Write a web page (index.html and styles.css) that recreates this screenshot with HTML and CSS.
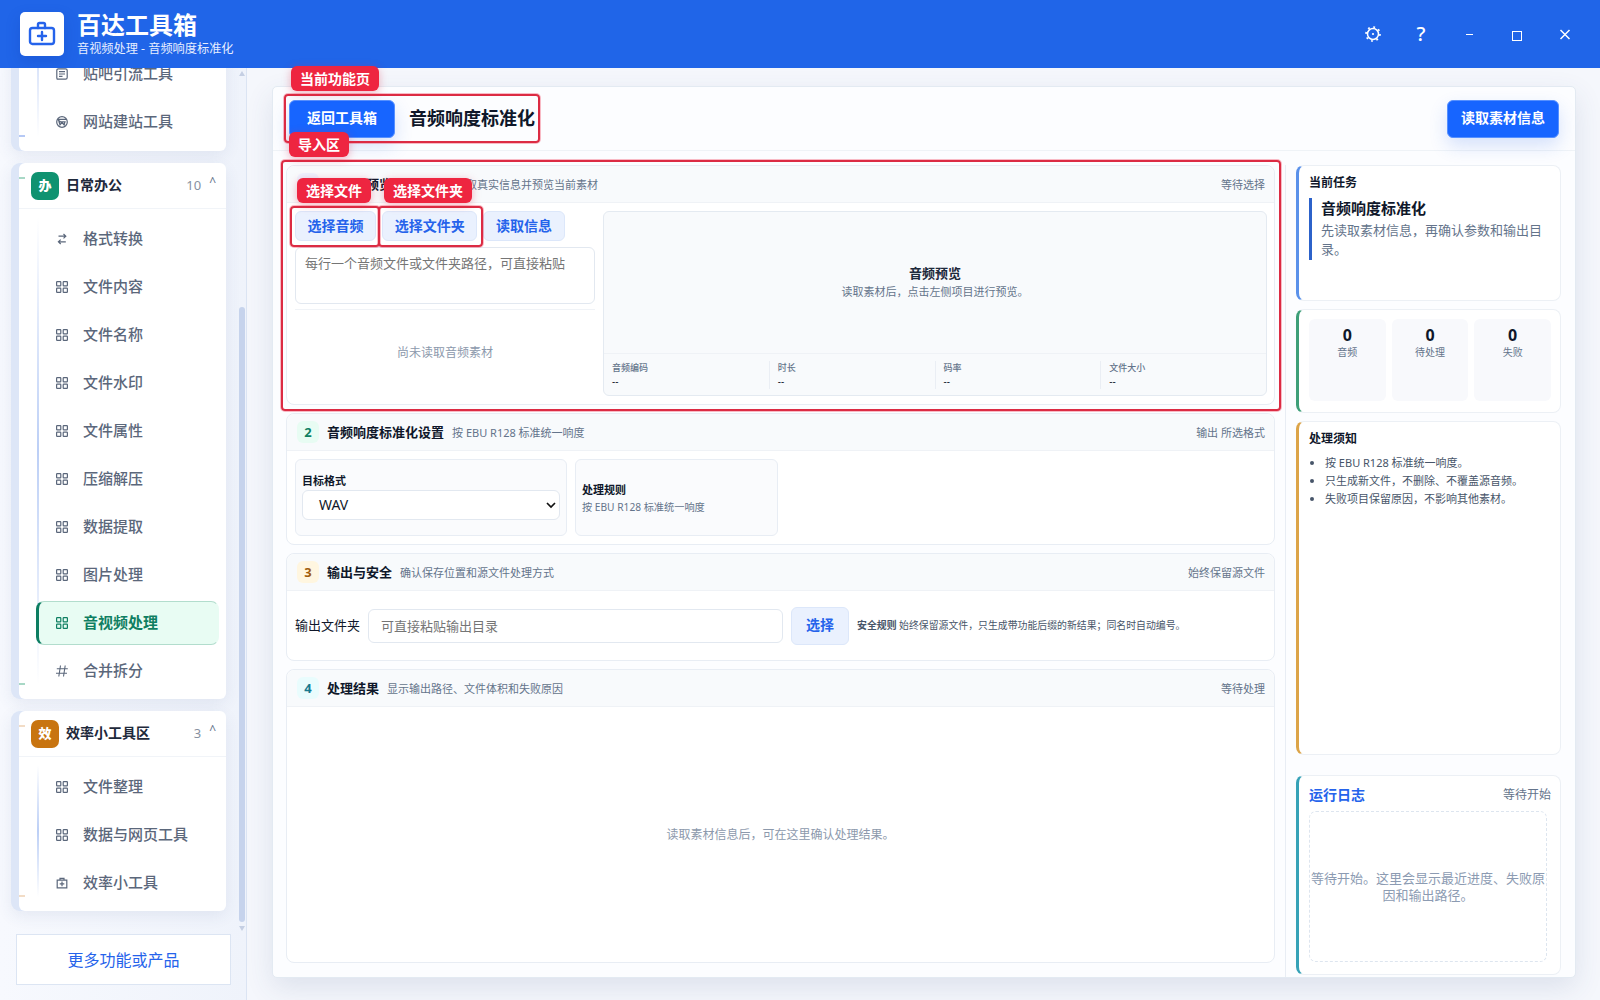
FILE: index.html
```html
<!DOCTYPE html>
<html lang="zh-CN">
<head>
<meta charset="utf-8">
<title>百达工具箱</title>
<link rel="stylesheet" href="styles.css">
</head>
<body>
<svg class="defs" width="0" height="0">
  <symbol id="grid" viewBox="0 0 12 12"><g fill="none" stroke="currentColor" stroke-width="1.200"><rect x=".6" y=".6" width="4.200" height="4.200" rx=".6"/><rect x="7.200" y=".6" width="4.200" height="4.200" rx=".6"/><rect x=".6" y="7.200" width="4.200" height="4.200" rx=".6"/><rect x="7.200" y="7.200" width="4.200" height="4.200" rx=".6"/></g></symbol>
  <symbol id="note" viewBox="0 0 12 12"><path fill="none" stroke="currentColor" stroke-width="1.200" d="M2.400.8h7.200q1.600 0 1.600 1.600v7.200q0 1.600-1.600 1.600H1.200L.8 9.800V2.400Q.8.8 2.400.8zM3 3.700h6M3 6h6M3 8.300h3.500"/></symbol>
  <symbol id="globe" viewBox="0 0 12 12"><g fill="none" stroke="currentColor" stroke-width="1.200"><circle cx="6" cy="6" r="5.300"/><path d="M1.500 3.400h9M3 5.800l1 3 2-2.300 2 2.300 1-3zM2 4l7 5"/></g></symbol>
  <symbol id="swap" viewBox="0 0 12 12"><path fill="none" stroke="currentColor" stroke-width="1.200" d="M2.500 3.200h7M7.500 1l2.300 2.200-2.300 2.200M9.800 8.800h-7M4.700 6.600L2.400 8.800 4.700 11"/></symbol>
  <symbol id="hash" viewBox="0 0 12 12"><path fill="none" stroke="currentColor" stroke-width="1.100" d="M4.500.5l-1.700 11M9.200.5l-1.700 11M.8 3.800h11M0 8.200h11"/></symbol>
  <symbol id="kit" viewBox="0 0 12 12"><path fill="none" stroke="currentColor" stroke-width="1.200" d="M1.200 3.200h9.600v7.600H1.200zM4 3V1.300h4V3M6 4.600v4.600M3.700 6.900h4.600"/></symbol>
</svg>
<header class="topbar">
  <div class="logo"><svg width="28" height="26" viewBox="0 0 28 26" fill="none" stroke="#2563eb" stroke-width="2.400" stroke-linecap="round" stroke-linejoin="round"><rect x="2" y="7" width="24" height="16" rx="2.500"/><path d="M10 7V3.500Q10 2 11.500 2h4Q17 2 17 3.500V7M14 11v8M10 15h8"/></svg></div>
  <div class="brand"><h1>百达工具箱</h1><p>音视频处理 - 音频响度标准化</p></div>
  <div class="window-controls">
    <span><svg width="18" height="18" viewBox="0 0 18 18" fill="none" stroke="#fff"><circle cx="9" cy="9" r="5.500" stroke-width="1.500"/><circle cx="9" cy="9" r="7" stroke-width="1.700" stroke-dasharray="1.900 3.598"/><circle cx="9" cy="9" r="1.100" fill="#fff" stroke="none"/></svg></span>
    <span class="help">?</span>
    <span><svg width="12" height="12" viewBox="0 0 12 12"><path d="M3 6.500h7" stroke="#fff"/></svg></span>
    <span><svg width="12" height="14" viewBox="0 0 12 14"><rect x="1.500" y="4.500" width="9" height="9" fill="none" stroke="#fff"/></svg></span>
    <span><svg width="12" height="12" viewBox="0 0 12 12"><path d="M1.500 2l9 9m0-9l-9 9" stroke="#fff" stroke-width="1.500"/></svg></span>
  </div>
</header>
<div class="body">
  <aside class="sidebar">
    <nav class="groups">
      <section class="group blue first">
        <ul>
          <li><svg><use href="#note"/></svg>贴吧引流工具</li>
          <li><svg><use href="#globe"/></svg>网站建站工具</li>
        </ul>
      </section>
      <section class="group green">
        <h2><b>办</b>日常办公<span class="count">10</span><i>^</i></h2>
        <ul>
          <li><svg><use href="#swap"/></svg>格式转换</li>
          <li><svg><use href="#grid"/></svg>文件内容</li>
          <li><svg><use href="#grid"/></svg>文件名称</li>
          <li><svg><use href="#grid"/></svg>文件水印</li>
          <li><svg><use href="#grid"/></svg>文件属性</li>
          <li><svg><use href="#grid"/></svg>压缩解压</li>
          <li><svg><use href="#grid"/></svg>数据提取</li>
          <li><svg><use href="#grid"/></svg>图片处理</li>
          <li class="active"><svg><use href="#grid"/></svg>音视频处理</li>
          <li><svg><use href="#hash"/></svg>合并拆分</li>
        </ul>
      </section>
      <section class="group orange">
        <h2><b>效</b>效率小工具区<span class="count">3</span><i>^</i></h2>
        <ul>
          <li><svg><use href="#grid"/></svg>文件整理</li>
          <li><svg><use href="#grid"/></svg>数据与网页工具</li>
          <li><svg><use href="#kit"/></svg>效率小工具</li>
        </ul>
      </section>
    </nav>
    <a class="more">更多功能或产品</a>
    <div class="scrollbar"><span class="up"></span><span class="thumb"></span><span class="down"></span></div>
  </aside>
  <main class="panel">
    <div class="panel-head">
      <button class="primary back">返回工具箱</button>
      <h2>音频响度标准化</h2>
      <button class="primary read">读取素材信息</button>
      <div class="mark mark-page"><span>当前功能页</span></div>
    </div>
    <div class="columns">
      <div class="steps">
        <section class="step step1">
          <div class="step-head"><b class="n1">1</b><h3>导入与预览</h3><p>选择素材后读取真实信息并预览当前素材</p><em>等待选择</em></div>
          <div class="import">
            <div class="source">
              <div class="actions"><button class="soft">选择音频</button><button class="soft">选择文件夹</button><button class="soft">读取信息</button></div>
              <textarea placeholder="每行一个音频文件或文件夹路径，可直接粘贴"></textarea>
              <div class="empty">尚未读取音频素材</div>
            </div>
            <div class="preview">
              <div class="stage"><strong>音频预览</strong><p>读取素材后，点击左侧项目进行预览。</p></div>
              <dl>
                <div><dt>音频编码</dt><dd>--</dd></div>
                <div><dt>时长</dt><dd>--</dd></div>
                <div><dt>码率</dt><dd>--</dd></div>
                <div><dt>文件大小</dt><dd>--</dd></div>
              </dl>
            </div>
          </div>
          <div class="mark mark-import"><span>导入区</span></div>
          <div class="mark mark-file"><span>选择文件</span></div>
          <div class="mark mark-folder"><span>选择文件夹</span></div>
        </section>
        <section class="step step2">
          <div class="step-head"><b class="n2">2</b><h3>音频响度标准化设置</h3><p>按 EBU R128 标准统一响度</p><em>输出 所选格式</em></div>
          <div class="settings">
            <div class="card format"><label>目标格式</label><div class="select">WAV<svg width="10" height="7" viewBox="0 0 10 7"><path d="M1 1l4 4 4-4" fill="none" stroke="#111" stroke-width="1.700"/></svg></div></div>
            <div class="card rule"><label>处理规则</label><p>按 EBU R128 标准统一响度</p></div>
          </div>
        </section>
        <section class="step step3">
          <div class="step-head"><b class="n3">3</b><h3>输出与安全</h3><p>确认保存位置和源文件处理方式</p><em>始终保留源文件</em></div>
          <div class="output">
            <label>输出文件夹</label><input placeholder="可直接粘贴输出目录"><button class="soft">选择</button>
            <p><strong>安全规则</strong> 始终保留源文件，只生成带功能后缀的新结果；同名时自动编号。</p>
          </div>
        </section>
        <section class="step step4">
          <div class="step-head"><b class="n4">4</b><h3>处理结果</h3><p>显示输出路径、文件体积和失败原因</p><em>等待处理</em></div>
          <div class="result">读取素材信息后，可在这里确认处理结果。</div>
        </section>
      </div>
      <aside class="info">
        <section class="task"><h4>当前任务</h4><div class="quote"><strong>音频响度标准化</strong><p>先读取素材信息，再确认参数和输出目录。</p></div></section>
        <section class="stats">
          <div><strong>0</strong><span>音频</span></div>
          <div><strong>0</strong><span>待处理</span></div>
          <div><strong>0</strong><span>失败</span></div>
        </section>
        <section class="notes"><h4>处理须知</h4>
          <ul><li>按 EBU R128 标准统一响度。</li><li>只生成新文件，不删除、不覆盖源音频。</li><li>失败项目保留原因，不影响其他素材。</li></ul>
        </section>
        <section class="log">
          <div class="log-head"><h4>运行日志</h4><span>等待开始</span></div>
          <div class="log-body">等待开始。这里会显示最近进度、失败原因和输出路径。</div>
        </section>
      </aside>
    </div>
  </main>
</div>
</body>
</html>
```
FILE: styles.css
```css
* { box-sizing: border-box; margin: 0; padding: 0; }
body {
  width: 1600px; height: 1000px; overflow: hidden;
  display: flex; flex-direction: column;
  font-family: "Noto Sans", "Noto Sans CJK SC", sans-serif;
  font-size: 13px; line-height: 1.3; color: #0f172a;
  background: #f5f7fc;
}
button, input, textarea { font: inherit; color: inherit; }
.defs { position: absolute; }
ul { list-style: none; }
em, i { font-style: normal; }

.topbar { height: 68px; flex: none; display: flex; align-items: center; padding: 0 11px 0 20px; background: #2065e8; color: #fff; }
.logo { width: 44px; height: 44px; border-radius: 5px; background: #fff; display: flex; align-items: center; justify-content: center; box-shadow: 0 6px 14px rgba(20, 60, 170, .25); }
.brand { margin: -2px 0 0 13px; }
.brand h1 { font-size: 24px; line-height: 30px; font-weight: 700; }
.brand p { font-size: 12.200px; line-height: 17px; color: #e6eeff; white-space: nowrap; }
.window-controls { margin-left: auto; display: flex; }
.window-controls span { width: 48px; height: 34px; display: flex; align-items: center; justify-content: center; }
.window-controls .help { font-size: 20px; font-weight: 500; }

.body { flex: 1; min-height: 0; display: flex; }
.sidebar { position: relative; width: 247px; flex: none; display: flex; flex-direction: column; border-right: 1px solid #dbe4f3; background: linear-gradient(90deg, #f7f9fe, #eff3fb); }
.groups { height: 866px; padding: 0 20px 0 11px; overflow: hidden; display: flex; flex-direction: column; gap: 12px; }
.group { position: relative; flex: none; border-left: 8px solid #dde6f7; border-radius: 9px; background: #dde6f7; box-shadow: 0 5px 16px rgba(60, 80, 130, .09); }
.group > * { background: #fff; }
.group h2 { height: 46px; border-radius: 6px 6px 0 0; border-bottom: 1px solid #f1f4f8; display: flex; align-items: center; padding: 0 10px 0 12px; font-size: 14px; font-weight: 700; color: #1e293b; }
.group h2 b { width: 28px; height: 28px; margin-right: 7px; border-radius: 7px; color: #fff; font-size: 13px; display: flex; align-items: center; justify-content: center; }
.green h2 b { background: #0f9270; }
.orange h2 b { background: #c87410; }
.count { margin-left: auto; font-size: 13px; font-weight: 400; color: #8791a1; }
.group h2 i { font-size: 12px; font-weight: 400; color: #64748b; margin: -7px 0 0 8px; }
.group ul { position: relative; padding: 8px 7px 6px 17px; display: flex; flex-direction: column; gap: 4px; border-radius: 0 0 6px 6px; }
.group.first { margin-top: -16px; }
.group.first ul { padding-top: 0; padding-bottom: 7px; }
.group ul::before { content: ""; position: absolute; left: 18px; top: 8px; bottom: 14px; width: 2px; background: linear-gradient(#fff, #bccff6 50%, #fff); }
.group.first ul::before { background: linear-gradient(#d6e1f9, #fff); }
.group::before, .group::after { content: ""; position: absolute; left: 0; width: 6px; height: 2px; background: var(--tick); z-index: 1; }
.group::before { top: 14px; }
.group::after { bottom: 14px; }
.blue { --tick: #b6c9f5; }
.green { --tick: #a8d8c6; }
.orange { --tick: #f2dcc6; }
.group li { position: relative; height: 44px; display: flex; align-items: center; padding-left: 19px; font-size: 15px; font-weight: 500; color: #5b677b; border-radius: 8px; border-left: 1px solid transparent; }
.group li svg { width: 12px; height: 12px; margin-right: 15px; }
.group li.active { padding-left: 17px; background: #e8fcf3; color: #0f7f62; font-weight: 700; border: 1px solid #b2ddcd; border-left: 3px solid #0c7d61; border-right-color: #e8fcf3; }
.more { margin: 0 15px 0 16px; height: 51px; display: flex; align-items: center; justify-content: center; background: #fff; border: 1px solid #dce5f3; color: #2563eb; font-size: 16px; padding-top: 1px; }
.scrollbar { position: absolute; right: 0; top: 3px; width: 8px; height: 862px; display: flex; flex-direction: column; align-items: center; }
.up, .down { border: 3px solid transparent; }
.up { border-bottom: 5px solid #c5cfe3; border-top: 0; }
.down { border-top: 5px solid #c5cfe3; border-bottom: 0; margin-top: 4px; }
.thumb { width: 6px; height: 615px; margin-top: 231px; border-radius: 3px; background: #c6d3ec; }

.panel { margin: 18px 24px 22px 25px; width: 1304px; display: flex; flex-direction: column; background: #fcfdff; border: 1px solid #e3eaf2; border-radius: 5px; box-shadow: 0 10px 28px rgba(50, 70, 120, .12); }
.panel-head { position: relative; height: 64px; display: flex; align-items: center; padding: 0 16px 0 16px; border-bottom: 1px solid #eff3f7; }
.primary { height: 38px; border: 1px solid #5690ff; border-radius: 6px; background: #1765ff; color: #fff; font-size: 14px; font-weight: 700; box-shadow: 0 8px 18px rgba(37, 99, 235, .18); }
.back { width: 106px; }
.read { width: 112px; margin-left: auto; }
.panel-head h2 { margin-left: 14px; font-size: 18px; font-weight: 700; }
.columns { flex: 1; display: flex; padding-left: 13px; }
.steps { width: 1000px; padding: 0 10px 14px 0; margin-top: 14px; display: flex; flex-direction: column; gap: 8px; border-right: 1px solid #e8edf4; }
.step { position: relative; display: flex; flex-direction: column; border: 1px solid #e8edf4; border-radius: 8px; background: #fff; }
.step1 { height: 240px; }
.step2 { height: 132px; }
.step3 { height: 108px; }
.step4 { flex: 1; }
.step-head { height: 37px; flex: none; display: flex; align-items: center; padding: 0 9px 0 10px; border-bottom: 1px solid #eff2f6; border-radius: 8px 8px 0 0; background: #f8fafc; }
.step-head b { width: 22px; height: 22px; border-radius: 6px; display: flex; align-items: center; justify-content: center; font-size: 13px; }
.n1 { background: #edf3ff; color: #2563eb; }
.n2 { background: #e8fcf3; color: #0f7f62; }
.n3 { background: #fff6e0; color: #a15c0c; }
.n4 { background: #e9fcfd; color: #177a90; }
.step-head h3 { margin-left: 8px; font-size: 13px; font-weight: 700; }
.step-head p { margin-left: 8px; padding-top: 2px; font-size: 11px; color: #64748b; }
.step-head em { margin-left: auto; padding-top: 2px; font-size: 11px; color: #64748b; }
.import { flex: 1; display: flex; gap: 8px; padding: 8px 7px 8px 8px; }
.source { width: 300px; display: flex; flex-direction: column; }
.actions { display: flex; gap: 6px; }
.soft { height: 30px; padding: 0 12px; border: 1px solid #dce7fa; border-radius: 6px; background: #eaf1fe; color: #2563eb; font-size: 14px; font-weight: 700; }
.actions .soft { padding: 0 11.600px; }
textarea { display: block; height: 57px; margin-top: 6px; padding: 7px 9px; border: 1px solid #e2e8f0; border-radius: 6px; resize: none; font-size: 13px; background: #fff; }
::placeholder { color: #757575; }
.empty { flex: 1; margin-top: 5px; border-top: 1px solid #f0f3f7; display: flex; align-items: center; justify-content: center; color: #8c99ac; font-size: 12px; }
.preview { flex: 1; display: flex; flex-direction: column; border: 1px solid #e4eaf1; border-radius: 6px; background: #f8fafc; }
.stage { flex: 1; display: flex; flex-direction: column; align-items: center; justify-content: center; }
.stage strong { font-size: 13px; line-height: 19px; color: #1e293b; }
.stage p { font-size: 11px; line-height: 18px; color: #64748b; }
.preview dl { height: 42px; display: flex; border-top: 1px solid #eff2f6; padding-top: 7px; }
.preview dl div { flex: 1; height: 28px; padding-left: 8px; border-right: 1px solid #eaeef4; }
.preview dl div:last-child { border: 0; }
dt { font-size: 9px; line-height: 13px; color: #64748b; font-weight: 500; }
dd { font-size: 10px; line-height: 14px; }
.settings { flex: 1; display: flex; gap: 8px; padding: 8px; }
.card { display: flex; flex-direction: column; justify-content: center; border: 1px solid #e8edf4; border-radius: 6px; background: #fafbfd; padding: 0 6px; }
.format { width: 272px; padding-top: 2px; padding-bottom: 5px; }
.rule { width: 203px; }
.card label { font-size: 11px; line-height: 18px; font-weight: 700; }
.card p { font-size: 10.200px; line-height: 16px; color: #64748b; }
.select { height: 30px; display: flex; align-items: center; justify-content: space-between; padding: 0 3px 0 16px; border: 1px solid #e2e8f0; border-radius: 6px; background: #fff; font-size: 14px; }
.output { flex: 1; display: flex; align-items: center; gap: 8px; padding: 0 8px; }
.output input { width: 415px; height: 34px; padding: 0 12px; border: 1px solid #e2e8f0; border-radius: 6px; background: #fff; }
.output .soft { width: 58px; height: 38px; }
.output p { font-size: 9.900px; color: #475569; white-space: nowrap; }
.result { flex: 1; display: flex; align-items: center; justify-content: center; font-size: 12px; color: #8c99ac; }

.info { width: 275px; display: flex; flex-direction: column; padding: 14px 0 2px 10px; }
.info section { border: 1px solid #ecf0f5; border-left: 3px solid var(--accent); border-radius: 8px; background: #fff; padding: 9px 9px 10px 10px; }
.info h4 { font-size: 12px; line-height: 16px; font-weight: 700; }
.info .task { --accent: #5a91ea; height: 136px; margin-bottom: 8px; }
.quote { margin-top: 7px; border-left: 3px solid #2c62ca; padding-left: 9px; height: 62px; }
.quote strong { display: block; font-size: 15px; line-height: 21px; }
.quote p { font-size: 13px; line-height: 19px; margin-top: 2px; color: #64748b; }
.info .stats { --accent: #3e9f78; height: 104px; margin-bottom: 8px; display: flex; gap: 6px; }
.stats div { flex: 1; height: 82px; padding-top: 7px; border-radius: 6px; background: #f8f9fc; text-align: center; }
.stats strong { display: block; font-size: 16px; line-height: 19px; }
.stats span { display: block; font-size: 10px; line-height: 14px; color: #64748b; }
.info .notes { --accent: #dca448; height: 334px; margin-bottom: 20px; }
.notes ul { list-style: disc; margin-top: 7px; padding-left: 16px; font-size: 11px; line-height: 18px; color: #475569; }
.info .log { --accent: #36a2b7; flex: 1; display: flex; flex-direction: column; }
.log-head { display: flex; justify-content: space-between; align-items: center; }
.log-head h4 { font-size: 14px; line-height: 20px; color: #2563eb; }
.log-head span { font-size: 12px; color: #64748b; }
.log-body { flex: 1; margin: 6px 4px 2px 0; border: 1px dashed #dde5ef; border-radius: 7px; display: flex; align-items: center; text-align: center; font-size: 13px; line-height: 17px; color: #8c9bb2; }

.mark { position: absolute; border: 2px solid #dc2b43; border-radius: 4px; box-shadow: 0 0 0 1px rgba(240, 60, 90, .35); z-index: 1; }
.mark span { position: absolute; height: 25px; padding: 0 9px; border-radius: 6px; background: #ee2540; color: #fff; font-size: 14px; font-weight: 700; line-height: 25px; white-space: nowrap; box-shadow: 0 2px 8px rgba(220, 40, 70, .35); }
.mark-page { left: 11px; top: 7px; width: 256px; height: 49px; }
.mark-page span { left: 5px; top: -30px; }
.mark-import { left: -6px; top: -6px; width: 1000px; height: 251px; }
.mark-import span { left: 6px; top: -30px; }
.mark-file { left: 3px; top: 40px; width: 90px; height: 41px; }
.mark-file span { left: 5px; top: -30px; }
.mark-folder { left: 91px; top: 40px; width: 105px; height: 41px; }
.mark-folder span { left: 4px; top: -30px; }
```
